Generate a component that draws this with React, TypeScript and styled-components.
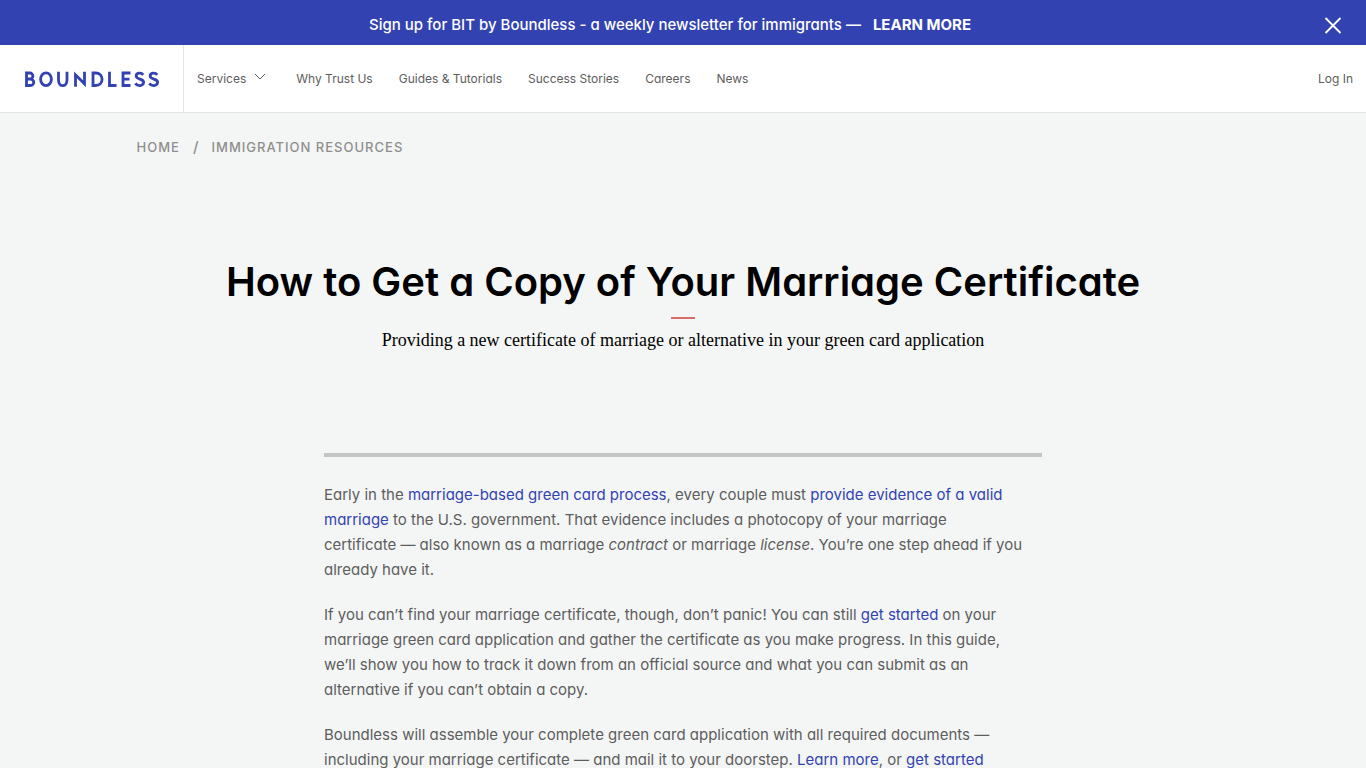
import React from "react";
import styled, { createGlobalStyle } from "styled-components";

const sans = `Inter, "Open Sans", "Liberation Sans", sans-serif`;
const serif = `"Liberation Serif", "Times New Roman", serif`;
const blue = "#3243b1";

const GlobalStyle = createGlobalStyle`
  * { box-sizing: border-box; }
  body {
    margin: 0;
    background: #f4f6f5;
    color: #5d5d5d;
    font-family: ${sans};
    font-feature-settings: "cv11" 1;
  }
  a { text-decoration: none; }
`;

const Banner = styled.aside`
  display: flex;
  align-items: center;
  height: 45px;
  padding: 4px 24px 0 16px;
  background: ${blue};
  color: #fff;
  font-size: 15px;
  line-height: 24px;
  font-weight: 500;
`;

const BannerText = styled.p`
  flex: 1;
  margin: 0;
  text-align: center;
`;

const BannerLink = styled.a`
  margin-left: 8px;
  color: #fff;
  font-weight: 700;
`;

const CloseButton = styled.button`
  display: flex;
  padding: 0;
  border: 0;
  background: none;
  color: #fff;
  cursor: pointer;
`;

const Header = styled.header`
  display: flex;
  height: 68px;
  background: #fff;
  border-bottom: 1px solid #e2e5e4;
`;

const Brand = styled.a`
  display: flex;
  align-items: center;
  width: 184px;
  padding-left: 24px;
  border-right: 1px solid #e2e5e4;
`;

const Nav = styled.nav`
  display: flex;
  flex: 1;
  align-items: center;
  justify-content: space-between;
  padding: 0 13px;
`;

const NavList = styled.ul`
  display: flex;
  gap: 26px;
  margin: 0;
  padding: 0;
  list-style: none;
`;

const NavLink = styled.a`
  display: flex;
  align-items: center;
  color: #5d5d5d;
  font-size: 12px;
  line-height: 20px;
`;

const Chevron = styled.svg`
  width: 12px;
  height: 12px;
  margin: 0 4px 0 8px;
`;

const Breadcrumbs = styled.nav`
  display: flex;
  align-items: center;
  gap: 13px;
  padding: 22px 10% 0;
  color: #8e8e8e;
  font-size: 13px;
  line-height: 24px;
  font-weight: 500;
`;

const Crumb = styled.a`
  color: #8e8e8e;
  letter-spacing: 1px;
  text-transform: uppercase;
`;

const Slash = styled.span`
  font-size: 15px;
`;

const Hero = styled.section`
  display: flex;
  flex-direction: column;
  align-items: center;
  padding: 95px 24px 0;
  color: #000;
  text-align: center;
`;

const Title = styled.h1`
  margin: 0;
  font-size: 40px;
  line-height: 56px;
  font-weight: 600;
`;

const Accent = styled.hr`
  width: 24px;
  height: 2px;
  margin: 7px 0 9px;
  border: 0;
  background: #db6b66;
`;

const Subtitle = styled.p`
  margin: 0;
  font-family: ${serif};
  font-size: 18px;
  line-height: 24px;
`;

const Article = styled.article`
  max-width: 718px;
  margin: 101px auto 0;
  padding-top: 25px;
  border-top: 4px solid #c2c5c4;
`;

const Paragraph = styled.p`
  margin: 0 0 20px;
  font-size: 15px;
  line-height: 25px;

  @media (max-width: 720px) {
    br { display: none; }
  }
`;

const TextLink = styled.a`
  color: ${blue};
`;

const Logo = () => (
  <svg width="136" height="18" viewBox="0 0 136 18" fill="none" stroke={blue} strokeWidth="2.800" aria-label="Boundless" role="img">
    <path d="M2.500 3v12.500h4a3 3 0 0 0 0-6.500h-4h3.400a3 3 0 0 0 0-6z" />
    <ellipse cx="22" cy="9.200" rx="5.400" ry="6.400" />
    <path d="M34.500 1.800v8.200c0 7.500 8.500 7.500 8.500 0V1.800" />
    <path d="M51.500 16.800V4.800L60.500 13.800V1.800" />
    <path d="M69 3v12.500h2.500c8.800 0 8.800-12.500 0-12.500z" />
    <path d="M85.500 1.800v13.700h7" />
    <path d="M106.500 3h-7.500v12.500h7.500M99 9.200h6.500" />
    <path d="M119.200 4.800c-2.200-2.700-7-2-7 1.100 0 3.800 7.400 2.500 7.400 6.200 0 4.200-6 4.500-8.300 1.300" />
    <path d="M133.200 4.800c-2.200-2.700-7-2-7 1.100 0 3.800 7.400 2.500 7.400 6.200 0 4.200-6 4.500-8.300 1.300" />
  </svg>
);

const links = ["Why Trust Us", "Guides & Tutorials", "Success Stories", "Careers", "News"];

export default function App() {
  return (
    <>
      <GlobalStyle />
      <Banner>
        <BannerText>
          Sign up for BIT by Boundless - a weekly newsletter for immigrants — <BannerLink href="#">LEARN MORE</BannerLink>
        </BannerText>
        <CloseButton aria-label="Close">
          <svg width="18" height="18" viewBox="0 0 18 18" stroke="currentColor" strokeWidth="1.800">
            <path d="M1.500 2l15 15M16.500 2l-15 15" />
          </svg>
        </CloseButton>
      </Banner>
      <Header>
        <Brand href="#"><Logo /></Brand>
        <Nav aria-label="Main">
          <NavList>
            <li>
              <NavLink href="#">
                Services
                <Chevron viewBox="0 0 12 12" fill="none" stroke="currentColor">
                  <path d="M1 1l5 5 5-5" />
                </Chevron>
              </NavLink>
            </li>
            {links.map((label) => (
              <li key={label}><NavLink href="#">{label}</NavLink></li>
            ))}
          </NavList>
          <NavLink href="#">Log In</NavLink>
        </Nav>
      </Header>
      <main>
        <Breadcrumbs aria-label="Breadcrumb">
          <Crumb href="#">Home</Crumb>
          <Slash>/</Slash>
          <Crumb href="#">Immigration Resources</Crumb>
        </Breadcrumbs>
        <Hero>
          <Title>How to Get a Copy of Your Marriage Certificate</Title>
          <Accent />
          <Subtitle>Providing a new certificate of marriage or alternative in your green card application</Subtitle>
        </Hero>
        <Article>
          <Paragraph>
            Early in the <TextLink href="#">marriage-based green card process</TextLink>, every couple must{" "}
            <TextLink href="#">provide evidence of a valid <br />marriage</TextLink> to the U.S. government. That
            evidence includes a photocopy of your marriage <br />
            certificate — also known as a marriage <em>contract</em> or marriage <em>license</em>. You’re one step
            ahead if you <br />
            already have it.
          </Paragraph>
          <Paragraph>
            If you can’t find your marriage certificate, though, don’t panic! You can still{" "}
            <TextLink href="#">get started</TextLink> on your <br />
            marriage green card application and gather the certificate as you make progress. In this guide, <br />
            we’ll show you how to track it down from an official source and what you can submit as an <br />
            alternative if you can’t obtain a copy.
          </Paragraph>
          <Paragraph>
            Boundless will assemble your complete green card application with all required documents — <br />
            including your marriage certificate — and mail it to your doorstep.{" "}
            <TextLink href="#">Learn more</TextLink>, or <TextLink href="#">get started</TextLink>
          </Paragraph>
        </Article>
      </main>
    </>
  );
}
